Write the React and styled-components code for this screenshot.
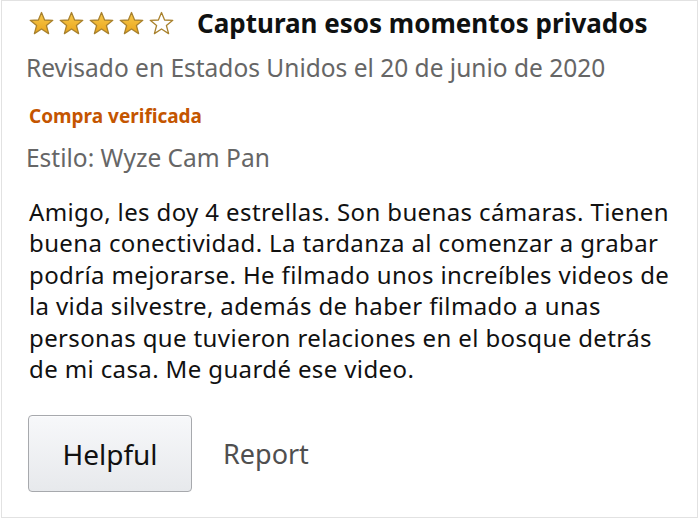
import React from "react";
import styled, { createGlobalStyle } from "styled-components";

const GlobalStyle = createGlobalStyle`
  html, body {
    margin: 0;
    padding: 0;
    background: #ffffff;
  }
  body {
    font-family: "Noto Sans", "Open Sans", sans-serif;
  }
`;

const Card = styled.section`
  width: 697px;
  height: 518px;
  margin-left: 1px;
  box-sizing: border-box;
  border: 1px solid #e2e2e2;
  padding: 6px 0 0 24px;
  background: #fff;
  color: #111;
`;

const Header = styled.div`
  display: flex;
  align-items: center;
  height: 32px;
`;

const Stars = styled.div`
  display: flex;
  gap: 3px;
  margin: 0 22px 0 2px;
`;

const Title = styled.h1`
  margin: 0;
  font-size: 26px;
  line-height: 32px;
  font-weight: 700;
  color: #0f1111;
`;

const Meta = styled.p`
  margin: ${(p) => p.$top}px 0 0;
  font-size: 24.5px;
  line-height: 30px;
  color: #666;
`;

const Verified = styled.p`
  margin: 20px 0 0 3px;
  font-size: 19px;
  line-height: 26px;
  font-weight: 700;
  color: #c45500;
`;

const Body = styled.p`
  margin: 23px 0 0 3px;
  font-size: 24px;
  letter-spacing: 0.38px;
  line-height: 31.4px;
  color: #111;
  white-space: nowrap;
`;

const Actions = styled.div`
  display: flex;
  align-items: center;
  gap: 31px;
  margin-top: 31px;
`;

const HelpfulButton = styled.button`
  width: 164px;
  height: 77px;
  margin-left: 2px;
  box-sizing: border-box;
  border: 1px solid #a7a9ad;
  border-radius: 4px;
  background: linear-gradient(to bottom, #f7f8fa, #e7e9ec);
  box-shadow: 0 1px 0 rgba(255, 255, 255, 0.6) inset;
  font-family: "Noto Sans", sans-serif;
  font-size: 28px;
  color: #111;
  padding: 0;
  cursor: pointer;
`;

const ReportLink = styled.span`
  font-size: 27px;
  color: #4f4f4f;
`;

const Star = ({ filled }) => (
  <svg width="27" height="25" viewBox="0 0 26 25">
    <defs>
      <linearGradient id="gold" x1="0" y1="0" x2="0" y2="1">
        <stop offset="0" stopColor="#f8c94a" />
        <stop offset="1" stopColor="#eaa51c" />
      </linearGradient>
    </defs>
    <path
      d="M13 1.5 L16.1 9 L24.3 9.3 L17.9 14.5 L20.1 22.6 L13 18 L5.9 22.6 L8.1 14.5 L1.7 9.3 L9.9 9 Z"
      fill={filled ? "url(#gold)" : "#fff"}
      stroke="#a9822e"
      strokeWidth="1.3"
      strokeLinejoin="round"
    />
  </svg>
);

const lines = [
  "Amigo, les doy 4 estrellas. Son buenas cámaras. Tienen",
  "buena conectividad. La tardanza al comenzar a grabar",
  "podría mejorarse. He filmado unos increíbles videos de",
  "la vida silvestre, además de haber filmado a unas",
  "personas que tuvieron relaciones en el bosque detrás",
  "de mi casa. Me guardé ese video.",
];

export default function App() {
  return (
    <>
      <GlobalStyle />
      <Card>
        <Header>
          <Stars>
            {[1, 2, 3, 4, 5].map((n) => (
              <Star key={n} filled={n <= 4} />
            ))}
          </Stars>
          <Title>Capturan esos momentos privados</Title>
        </Header>
        <Meta $top={14}>Revisado en Estados Unidos el 20 de junio de 2020</Meta>
        <Verified>Compra verificada</Verified>
        <Meta $top={14}>Estilo: Wyze Cam Pan</Meta>
        <Body>
          {lines.map((line, i) => (
            <React.Fragment key={i}>
              {line}
              {i < lines.length - 1 && <br />}
            </React.Fragment>
          ))}
        </Body>
        <Actions>
          <HelpfulButton>Helpful</HelpfulButton>
          <ReportLink>Report</ReportLink>
        </Actions>
      </Card>
    </>
  );
}
